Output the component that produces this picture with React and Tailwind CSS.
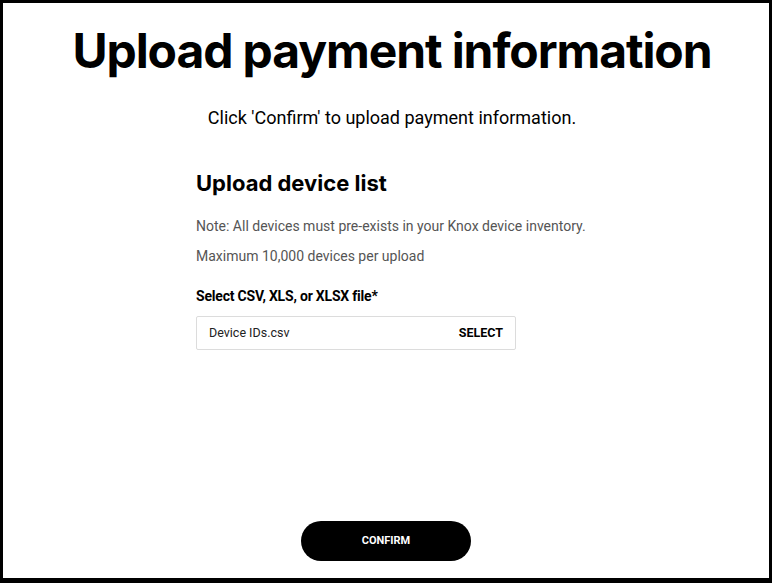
import React from 'react'

function App() {
    return (
        <div className="h-[583px] w-[772px] border-[3px] border-b-[5px] border-black bg-white flex flex-col items-center text-black" style={{ fontFamily: 'Roboto, "Noto Sans", sans-serif' }}>
            <div className="self-stretch pl-[12px] flex flex-col items-center">
                {/* Heading */}
                <h1 className="mt-[22px] text-[48px] leading-[52px] font-bold tracking-[-1.1px]" style={{ fontFamily: 'Inter, sans-serif' }}>
                    Upload payment information
                </h1>
                <p className="mt-[29px] text-[18px] leading-[24px]">
                    Click 'Confirm' to upload payment information.
                </p>

                {/* Upload form */}
                <div className="w-[392px] mt-[40px]">
                    <h2 className="text-[22px] leading-[26px] font-bold" style={{ fontFamily: 'Inter, sans-serif' }}>
                        Upload device list
                    </h2>
                    <p className="mt-[20px] text-[14px] leading-[20px] text-[#555] whitespace-nowrap">
                        Note: All devices must pre-exists in your Knox device inventory.
                    </p>
                    <p className="mt-[10px] text-[14px] leading-[20px] text-[#555] whitespace-nowrap">
                        Maximum 10,000 devices per upload
                    </p>
                    <label className="block mt-[20px] text-[14px] leading-[20px] font-bold tracking-[-0.2px]">
                        Select CSV, XLS, or XLSX file*
                    </label>
                    <div className="mt-[10px] w-[320px] h-[34px] border border-[#dcdcdc] rounded-[2px] flex items-center justify-between px-[12px]">
                        <span className="text-[12.5px] text-[#222]">Device IDs.csv</span>
                        <button className="text-[12.5px] font-bold">SELECT</button>
                    </div>
                </div>
            </div>

            {/* Confirm */}
            <button className="mt-auto mb-[17px] w-[170px] h-[40px] rounded-full bg-black text-white text-[11px] font-bold">
                CONFIRM
            </button>
        </div>
    )
}

export default App
